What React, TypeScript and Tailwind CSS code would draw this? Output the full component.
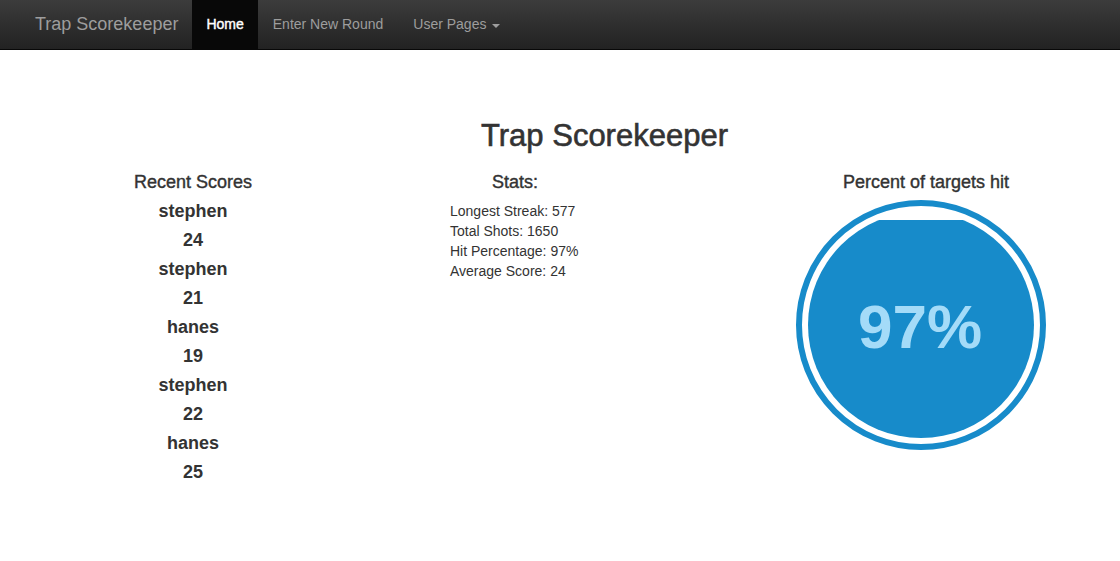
import React from "react"

const scores = [
  { name: "stephen", score: 24 },
  { name: "stephen", score: 21 },
  { name: "hanes", score: 19 },
  { name: "stephen", score: 22 },
  { name: "hanes", score: 25 },
]

const stats = [
  "Longest Streak: 577",
  "Total Shots: 1650",
  "Hit Percentage: 97%",
  "Average Score: 24",
]

function FillGauge({ percent }: { percent: number }) {
  // liquid fill style gauge: outer ring, gap, then a circle filled up to the level
  const inner = 113
  const level = 20
  return (
    <svg width="250" height="250" viewBox="0 0 250 250">
      <defs>
        <clipPath id="fill-level">
          <rect x="0" y={level} width="250" height={250 - level} />
        </clipPath>
      </defs>
      <circle cx="125" cy="125" r="122" fill="none" stroke="#178bca" strokeWidth="6" />
      <circle cx="125" cy="125" r={inner} fill="#178bca" clipPath="url(#fill-level)" />
      <text
        x="124"
        y="148"
        textAnchor="middle"
        fill="#a4dbf8"
        fontFamily="'Liberation Sans', Arial, sans-serif"
        fontWeight="bold"
        fontSize="62"
      >
        {percent}%
      </text>
    </svg>
  )
}

export default function App() {
  return (
    <div className="min-h-[561px] bg-white text-[#333] font-['Liberation_Sans',Arial,sans-serif]">
      <nav className="h-[50px] flex items-stretch bg-gradient-to-b from-[#3c3c3c] to-[#222] border-b border-[#080808]">
        <a className="flex items-center pl-[35px] pr-[14px] text-[18px] text-[#9d9d9d]">Trap Scorekeeper</a>
        <a className="flex items-center px-[14px] text-[14px] text-white bg-[#080808] [-webkit-text-stroke:0.4px_#fff]">Home</a>
        <a className="flex items-center px-[15px] text-[14px] text-[#9d9d9d]">Enter New Round</a>
        <a className="flex items-center px-[15px] text-[14px] text-[#9d9d9d]">
          User Pages
          <span className="ml-[6px] mt-[2px] w-0 h-0 border-x-[4px] border-x-transparent border-t-[4px] border-t-[#9d9d9d]" />
        </a>
      </nav>

      <h2 className="pt-[68px] text-center text-[31px] leading-[36px] pl-[89px] [-webkit-text-stroke:0.6px_#333]">
        Trap Scorekeeper
      </h2>

      <div className="flex mt-[17px]">
        <div className="w-[386px] text-center">
          <h4 className="text-[18px] leading-[22px] [-webkit-text-stroke:0.4px_#333]">Recent Scores</h4>
          <div className="mt-[4px] text-[18px] leading-[29px] font-bold">
            {scores.map((s, i) => (
              <div key={i}>
                <div>{s.name}</div>
                <div>{s.score}</div>
              </div>
            ))}
          </div>
        </div>

        <div className="w-[258px]">
          <h4 className="text-center text-[18px] leading-[22px] [-webkit-text-stroke:0.4px_#333]">Stats:</h4>
          <ul className="mt-[8px] pl-[64px] text-[14px] leading-[20px]">
            {stats.map((s) => (
              <li key={s}>{s}</li>
            ))}
          </ul>
        </div>

        <div className="ml-[88px] flex-1 text-center">
          <h4 className="text-[18px] leading-[22px] [-webkit-text-stroke:0.4px_#333]">Percent of targets hit</h4>
          <div className="mt-[7px] flex justify-center pr-[10px]">
            <FillGauge percent={97} />
          </div>
        </div>
      </div>
    </div>
  )
}
